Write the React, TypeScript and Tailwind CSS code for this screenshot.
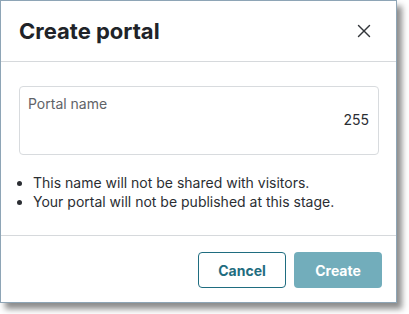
import { X } from "lucide-react";

export default function App() {
  return (
    <div className="w-[409px] h-[314px] bg-white" style={{ fontFamily: "Inter, 'Liberation Sans', sans-serif" }}>
      <div className="w-[397px] h-[303px] flex flex-col bg-white border border-[#8ea5b6] shadow-[5px_6px_6px_rgba(0,0,0,0.45)]">
        {/* header */}
        <div className="h-[61px] flex items-center justify-between pl-[18px] pr-[26px] border-b border-[#d6d9dc]">
          <h1 className="text-[22px] font-bold text-[#202328] tracking-[0px] pt-[1px]">Create portal</h1>
          <X className="w-[22px] h-[22px] text-[#33363b] -mr-[5px]" strokeWidth={1.5} />
        </div>

        {/* body */}
        <div className="flex-1 pt-[24px] px-[18px] border-b border-[#d6d9dc]">
          <div className="h-[69px] w-[360px] rounded-[4px] border border-[#d8dbde] pt-[7px] pl-[8px] pr-[9px] flex flex-col">
            <span className="text-[14px] leading-[20px] text-[#5f6368]">Portal name</span>
            <span className="text-[14px] leading-[20px] text-[#2b2e33] self-end -mt-[4px]">255</span>
          </div>
          <ul className="mt-[18px] list-disc pl-[14px] text-[14px] leading-[19px] text-[#2b2e33]">
            <li>This name will not be shared with visitors.</li>
            <li>Your portal will not be published at this stage.</li>
          </ul>
        </div>

        {/* footer */}
        <div className="h-[66px] flex items-center justify-end gap-[8px] pr-[14px] pt-[2px]">
          <button className="w-[88px] h-[36px] rounded-[4px] border border-[#1f6d80] text-[#1f6d80] text-[14px] font-bold bg-white">
            Cancel
          </button>
          <button className="w-[88px] h-[36px] rounded-[4px] bg-[#72adbb] text-white text-[14px] font-bold">
            Create
          </button>
        </div>
      </div>
    </div>
  );
}
